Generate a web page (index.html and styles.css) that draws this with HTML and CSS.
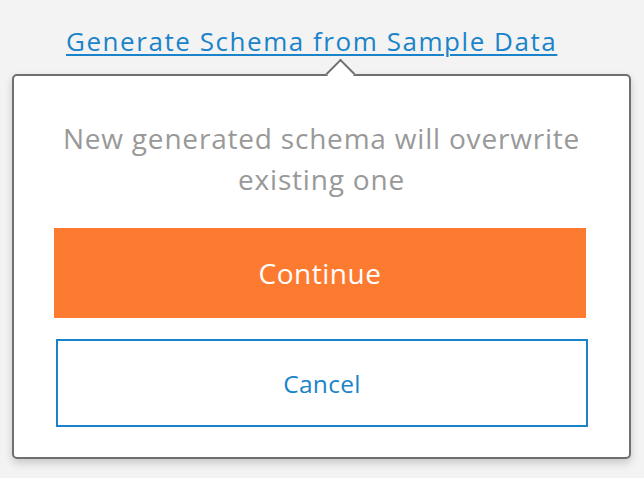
FILE: index.html
```html
<!DOCTYPE html>
<html>
<head>
<meta charset="utf-8">
<link rel="stylesheet" href="styles.css">
</head>
<body>
<div class="page">
  <div class="link-row">
    <a class="gen-link" href="#">Generate Schema from Sample Data</a>
  </div>
  <div class="popover">
    <span class="arrow"></span>
    <p class="message">New generated schema will overwrite<br>existing one</p>
    <button class="btn btn-continue">Continue</button>
    <button class="btn btn-cancel">Cancel</button>
  </div>
</div>
</body>
</html>
```

FILE: styles.css
```css
html, body {
  margin: 0;
  padding: 0;
  background: #f3f3f3;
  width: 644px;
  height: 478px;
  overflow: hidden;
  font-family: "Open Sans", "Lato", sans-serif;
}
.page {
  padding: 25px 0 0 12px;
}
.link-row {
  padding-left: 54px;
  height: 49px;
}
.gen-link {
  color: #1a83c9;
  font-size: 26px;
  letter-spacing: 1.55px;
  text-decoration: underline;
  text-decoration-thickness: 2px;
  text-underline-offset: 3px;
  line-height: 32px;
}
.popover {
  position: relative;
  box-sizing: border-box;
  width: 619px;
  height: 385px;
  background: #fff;
  border: 2px solid #6f6f6f;
  border-radius: 5px;
  box-shadow: 0 4px 8px rgba(0,0,0,0.18);
  padding: 42px 40px 0 40px;
  display: flex;
  flex-direction: column;
  align-items: flex-start;
}
.arrow {
  position: absolute;
  top: -13px;
  left: 316px;
  width: 21px;
  height: 21px;
  background: #fff;
  border-top: 2px solid #6f6f6f;
  border-left: 2px solid #6f6f6f;
  transform: rotate(45deg);
  box-sizing: border-box;
}
.message {
  margin: 0;
  width: 100%;
  text-align: center;
  color: #999;
  font-size: 28px;
  letter-spacing: 0.8px;
  line-height: 41px;
  height: 110px;
}
.btn {
  box-sizing: border-box;
  width: 532px;
  font-family: inherit;
  cursor: pointer;
  border-radius: 0;
}
.btn-continue {
  height: 90px;
  background: #fd7a31;
  border: none;
  color: #fff;
  font-size: 28px;
  letter-spacing: 0.5px;
}
.btn-cancel {
  margin-top: 21px;
  margin-left: 2px;
  height: 88px;
  background: #fff;
  border: 2px solid #1a83c9;
  color: #1a83c9;
  font-size: 24.5px;
  letter-spacing: 0.3px;
}
```
